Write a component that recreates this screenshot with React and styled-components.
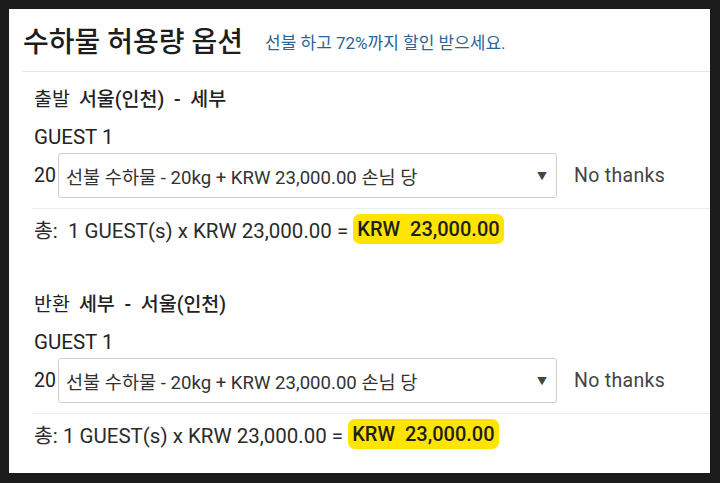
import React from "react";
import styled, { createGlobalStyle } from "styled-components";

const GlobalStyle = createGlobalStyle`
  html, body {
    margin: 0;
    background: #1b1b1b;
  }
  body {
    font-family: Roboto, "Noto Sans CJK KR", sans-serif;
    color: #2b2b2b;
  }
`;

const segments = [
  {
    id: "out",
    label: "출발",
    route: "서울(인천)  -  세부",
    gap: "  ",
  },
  {
    id: "back",
    label: "반환",
    route: "세부  -  서울(인천)",
    gap: " ",
  },
];

const App = () => {
  return (
    <>
      <GlobalStyle />
      <Frame>
        <Panel>
          <Header>
            <Title>수하물 허용량 옵션</Title>
            <Promo>선불 하고 72%까지 할인 받으세요.</Promo>
          </Header>
          {segments.map((seg, i) => (
            <Segment key={seg.id} $first={i === 0}>
              <Route>
                <RouteLabel>{seg.label}</RouteLabel>
                <RouteName>{seg.route}</RouteName>
              </Route>
              <Guest>GUEST 1</Guest>
              <OptionRow>
                <Weight>20</Weight>
                <Select>
                  <span>선불 수하물 - 20kg + KRW 23,000.00 손님 당</span>
                  <Caret>▼</Caret>
                </Select>
                <Decline>No thanks</Decline>
              </OptionRow>
              <Total>
                <span>
                  {"총:" + seg.gap + "1 GUEST(s) x KRW 23,000.00 = "}
                </span>
                <Amount>{"KRW  23,000.00"}</Amount>
              </Total>
            </Segment>
          ))}
        </Panel>
      </Frame>
    </>
  );
};

const Frame = styled.div`
  width: 720px;
  height: 483px;
  box-sizing: border-box;
  padding: 9px 10px 10px 9px;
`;

const Panel = styled.div`
  height: 100%;
  background: #fff;
  display: flex;
  flex-direction: column;
`;

const Header = styled.div`
  margin-left: 13px;
  height: 62px;
  display: flex;
  align-items: center;
  gap: 22px;
  border-bottom: 1px solid #e4e4e4;
`;

const Title = styled.h1`
  margin: 0 0 0 1px;
  font-size: 28px;
  font-weight: 500;
  color: #1d1d1d;
`;

const Promo = styled.span`
  font-size: 17px;
  color: #2a6496;
  padding-top: 3px;
`;

const Segment = styled.section`
  padding-left: 25px;
  padding-top: ${(p) => (p.$first ? "14px" : "42px")};
  display: flex;
  flex-direction: column;
`;

const Route = styled.div`
  height: 28px;
  line-height: 28px;
  font-size: 19.5px;
  white-space: pre;
  color: #222;
`;

const RouteLabel = styled.span`
  font-weight: 400;
  margin-right: 9px;
`;

const RouteName = styled.span`
  font-weight: 500;
`;

const Guest = styled.div`
  margin-top: 9px;
  height: 28px;
  line-height: 28px;
  font-size: 20.5px;
  color: #222;
`;

const OptionRow = styled.div`
  margin-top: 2px;
  display: flex;
  align-items: center;
  font-size: 19.5px;
`;

const Weight = styled.span`
  width: 24px;
  color: #222;
`;

const Select = styled.div`
  width: 499px;
  height: 45px;
  box-sizing: border-box;
  border: 1px solid #cfcfcf;
  border-radius: 3px;
  padding: 0 9px 0 7px;
  display: flex;
  align-items: center;
  justify-content: space-between;
  font-size: 18.6px;
  color: #333;
`;

const Caret = styled.span`
  font-size: 10px;
  color: #444;
`;

const Decline = styled.span`
  margin-left: 17px;
  color: #444;
  letter-spacing: 0.3px;
`;

const Total = styled.div`
  margin: 10px 0 0 -2px;
  padding-left: 2px;
  border-top: 1px solid #ececec;
  height: 40px;
  display: flex;
  align-items: center;
  font-size: 20.5px;
  white-space: pre;
  color: #2b2b2b;
`;

const Amount = styled.span`
  background: #ffe400;
  border-radius: 7px;
  padding: 4px 4px 3px;
  font-size: 20px;
  font-weight: 500;
  color: #1e1e1e;
  line-height: 23px;
`;

export default App;
